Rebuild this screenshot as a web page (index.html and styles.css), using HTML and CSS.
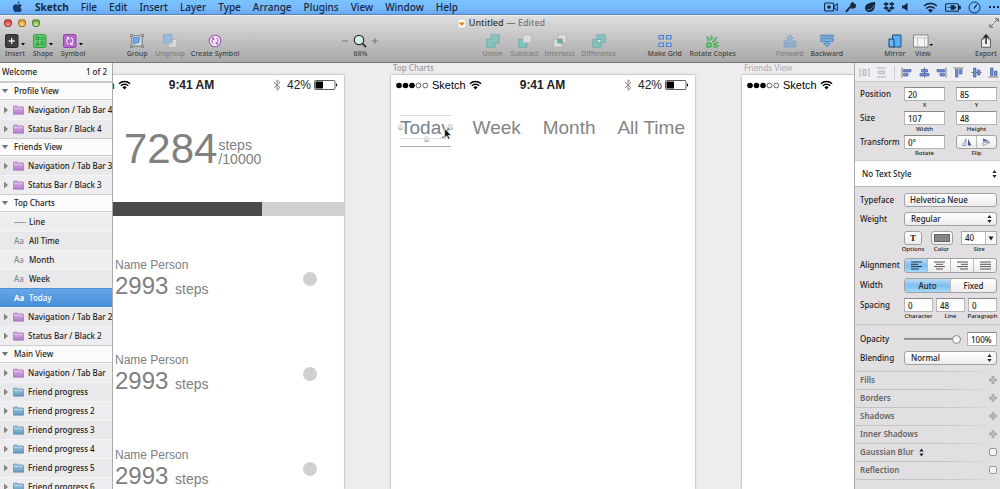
FILE: index.html
```html
<!DOCTYPE html>
<html lang="en">
<head>
<meta charset="utf-8">
<title>Untitled — Sketch</title>
<link rel="stylesheet" href="styles.css">
</head>
<body>
<svg class="defs" aria-hidden="true">
  <defs>
    <linearGradient id="purple" x1="0" y1="0" x2="0" y2="1"><stop offset="0" stop-color="#dcb0e6"/><stop offset="1" stop-color="#b57fcb"/></linearGradient>
    <linearGradient id="blue" x1="0" y1="0" x2="0" y2="1"><stop offset="0" stop-color="#a3cbe4"/><stop offset="1" stop-color="#649bc0"/></linearGradient>
    <symbol id="folder-purple" viewBox="0 0 12 10"><path d="M.5 9.5v-8l.5-.8h3.500l.8 1h5.700l.5.500v7.300z" fill="url(#purple)" stroke="#9868ad" stroke-width=".7"/><path d="M1 3.500h10" stroke="#ecd3f2" stroke-width=".7"/></symbol>
    <symbol id="folder-blue" viewBox="0 0 12 10"><path d="M.5 9.5v-8l.5-.8h3.500l.8 1h5.700l.5.500v7.300z" fill="url(#blue)" stroke="#5484a5" stroke-width=".7"/><path d="M1 3.500h10" stroke="#cfe5f2" stroke-width=".7"/></symbol>
    <symbol id="closed" viewBox="0 0 6 8"><path d="M1 .5v7L5 4z" fill="#858585"/></symbol>
    <symbol id="open" viewBox="0 0 8 6"><path d="M.8 1h6.400L4 5z" fill="#777"/></symbol>
    <symbol id="wifi" viewBox="0 0 14 10"><g fill="none" stroke="currentColor" stroke-width="1.500"><path d="M1 3.600a8.600 8.600 0 0 1 12 0M3 5.900a5.700 5.700 0 0 1 8 0"/></g><path d="M4.700 7.500a3.300 3.300 0 0 1 4.600 0L7 9.800z" fill="currentColor"/></symbol>
    <symbol id="signal" viewBox="0 0 33 7"><g fill="#000"><circle cx="3" cy="3.500" r="2.800"/><circle cx="9.500" cy="3.500" r="2.800"/><circle cx="16" cy="3.500" r="2.800"/></g><g fill="none" stroke="#222" stroke-width=".7"><circle cx="22.500" cy="3.500" r="2.400"/><circle cx="29.300" cy="3.500" r="2.400"/></g></symbol>
    <symbol id="bluetooth" viewBox="0 0 8 12"><path d="M1 3.200l6 5.300-3 2.700V.8l3 2.700-6 5.300" fill="none" stroke="#777" stroke-width=".9"/></symbol>
    <symbol id="battery" viewBox="0 0 24 10"><rect x=".5" y=".5" width="20.500" height="9" rx="1" fill="#fff" stroke="#333" stroke-width=".8"/><path d="M1.500 1.500h7.500v7H1.500z"/><path d="M22 3.300c1.500.5 1.500 2.900 0 3.400z"/></symbol>
    <symbol id="updown" viewBox="0 0 5 9"><path d="M.4 3.600L2.500.6l2.100 3zM.4 5.400l2.100 3 2.100-3z" fill="#222"/></symbol>
    <symbol id="plus" viewBox="0 0 8 8"><path d="M3 .5h2V3h2.500v2H5v2.500H3V5H.5V3H3z" fill="#c0bfc0" stroke="#929192" stroke-width=".6"/></symbol>
  </defs>
</svg>

<div class="screen">
  <header class="menubar">
    <nav class="menus" aria-label="Application menu">
      <svg class="apple" viewBox="0 0 12 13" aria-hidden="true"><path d="M8.200.3c.1 1.300-1 2.700-2.300 2.700C5.800 1.700 6.900.5 8.200.3zM10.700 9.200c-.5 1.300-1.500 3-2.600 3-.8 0-1-.5-2-.5s-1.300.5-2 .5C2.600 12.200 1 9.300 1 7c0-2.300 1.400-3.600 2.800-3.600.9 0 1.600.6 2.200.6.600 0 1.500-.7 2.700-.6.600 0 1.500.3 2 1.100-1.900 1.200-1.500 3.800 0 4.700z" fill="#173a66"/></svg>
      <a class="app-name" href="#">Sketch</a><a href="#">File</a><a href="#">Edit</a><a href="#">Insert</a><a href="#">Layer</a><a href="#">Type</a><a href="#">Arrange</a><a href="#">Plugins</a><a href="#">View</a><a href="#">Window</a><a href="#">Help</a>
    </nav>
    <div class="tray" aria-hidden="true">
      <svg width="14" height="10" viewBox="0 0 14 10"><rect x=".6" y="1" width="9" height="8" rx="1" fill="none" stroke="#12283f" stroke-width="1.100"/><circle cx="5" cy="5" r="1.800" fill="#12283f"/><path d="M10 4l3.300-2.500v7L10 6z" fill="none" stroke="#12283f"/></svg>
      <svg width="12" height="12" viewBox="0 0 12 12"><path d="M1 10.800l5-5.600" stroke="#12283f" stroke-width="2"/><path d="M5 3.500L7.500.8l3.800 3.300-1 2.800-3.500 1z" fill="#12283f"/></svg>
      <svg width="12" height="12" viewBox="0 0 12 12"><path d="M1.300 8.500C-.2 4 4.500 1.500 11 1c.7 4-.7 10-5.500 10C3.500 11 2 10.200 1.300 8.500z" fill="#12283f"/><path d="M3 8.500c3 .8 6-1 7-4.500" stroke="#78b4ef" fill="none" stroke-width=".7"/></svg>
      <svg width="12" height="12" viewBox="0 0 12 12"><path d="M3.300 1L6 3 3 5 .3 3zM8.700 1l3 2L9 5 6 3zM3 5l3 2-2.700 2L.3 7zM9 5l2.700 2-3 2L6 7zM3.500 9.500L6 8l2.500 1.500L6 11.300z" fill="#12283f"/></svg>
      <svg width="6" height="10" viewBox="0 0 6 10"><path d="M0 3.500h2L5.500.8v8.400L2 6.500H0z" fill="#12283f"/></svg>
      <svg class="tray-wifi" width="15" height="11"><use href="#wifi"/></svg>
      <svg width="16" height="9" viewBox="0 0 16 9"><rect x=".6" y=".8" width="12.800" height="7.400" rx="1" fill="none" stroke="#12283f" stroke-width="1.100"/><path d="M14 3h1.500v3H14M2.500 4.500H6M6 2.500h3l2 2-2 2H6z" fill="#12283f" stroke="#12283f" stroke-width=".7"/></svg>
      <svg width="13" height="13" viewBox="0 0 13 13"><circle cx="6.500" cy="6.500" r="5.500" fill="none" stroke="#12283f"/><path d="M6 7.500L9 3.300" stroke="#12283f" stroke-width="1.200"/></svg>
      <svg width="11" height="4" viewBox="0 0 11 4"><path d="M1 2h2M5 2h2M9 2h2" stroke="#12283f" stroke-width="2"/></svg>
    </div>
  </header>

  <header class="chrome">
    <div class="titlebar">
      <div class="lights"><button class="light red" aria-label="Close"></button><button class="light amber" aria-label="Minimize"></button><button class="light green" aria-label="Zoom"></button></div>
      <h1 class="title"><svg width="8" height="9" viewBox="0 0 8 9" aria-hidden="true"><path d="M.5.500h5l2 2v6h-7z" fill="#fff" stroke="#ccc" stroke-width=".5"/><path d="M2 3.200h3.500l1 1.300L3.800 7 1.200 4.500z" fill="#ed8a1c"/></svg>Untitled <span class="muted">— Edited</span></h1>
      <button class="fullscreen" aria-label="Full screen"><svg width="10" height="10" viewBox="0 0 10 10"><path d="M6 .8h3.300V4M9 1L5.500 4.500M4 9.200H.8V6M1 9l3.500-3.500" fill="none" stroke="#666"/></svg></button>
    </div>
    <div class="toolbar">
      <button class="tool w28"><svg class="menu-icon" viewBox="0 0 20 14"><rect x=".5" y=".5" width="12.500" height="13" rx="1.500" fill="#414141" stroke="#2b2b2b"/><path d="M6.700 4v6M3.700 7h6" stroke="#eee" stroke-width="1.300"/><path d="M16 9h4l-2 2.500z"/></svg>Insert</button>
      <button class="tool w28"><svg class="menu-icon" viewBox="0 0 20 14"><rect x=".5" y=".5" width="12.500" height="13" rx="1.500" fill="#63ce70" stroke="#39984a"/><g fill="none" stroke="#257f37" stroke-width=".9"><path d="M3 3h2.800v2.800H3z"/><circle cx="9.500" cy="4.500" r="1.600"/><path d="M2.800 11L4.500 8l1.700 3z"/><rect x="8" y="8.200" width="3" height="2.800" rx=".7"/></g><path d="M16 9h4l-2 2.500z"/></svg>Shape</button>
      <button class="tool w32"><svg class="menu-icon" viewBox="0 0 20 14"><rect x=".5" y=".5" width="12.500" height="13" rx="1.500" fill="#b765cf" stroke="#9147a8"/><path d="M5.500 10.500c-2.500-1.500-2.500-5.500 0-7M3.500 3.500h2.300v2.300M8 3.500c2.500 1.500 2.500 5.500 0 7M10 10.500H7.700V8.200" fill="none" stroke="#f5e3fa" stroke-width="1.100"/><path d="M16 9h4l-2 2.500z"/></svg>Symbol</button>
      <span class="space short"></span>
      <button class="tool w34"><svg viewBox="0 0 14 14"><path d="M1.500 1.500h11v11h-11z" fill="none" stroke="#777" stroke-width=".7"/><path d="M6 6h5v5H6z" fill="#eee" stroke="#aaa" stroke-width=".5"/><path d="M3.500 3.500h5.500v5.500H3.500z" fill="#69aef0" stroke="#347cbd" stroke-width=".7"/><path d="M0 0h3v3H0zM11 0h3v3h-3zM0 11h3v3H0zM11 11h3v3h-3z" fill="#858585"/><path d="M1 1h1v1H1zM12 1h1v1h-1zM1 12h1v1H1zM12 12h1v1h-1z" fill="#ddd"/></svg>Group</button>
      <button class="tool w32" disabled><svg viewBox="0 0 14 14"><path d="M5.500 5.500h8v8h-8z" fill="#e3e3e3" stroke="#aaa" stroke-width=".6"/><path d="M.5.500h8.500V9H.5z" fill="#86b9e6" stroke="#6594bd" stroke-width=".6"/></svg>Ungroup</button>
      <button class="tool w58"><svg viewBox="0 0 14 14"><circle cx="7" cy="7" r="5.800" fill="#f5edf7" stroke="#9c5cae" stroke-width="1.100"/><path d="M5.500 10c-2-1.500-2-4.500 0-6M3.800 4h2v2M8.500 4c2 1.500 2 4.500 0 6M10.200 10h-2V8" fill="none" stroke="#a44bbb"/></svg>Create Symbol</button>
      <span class="space wide"></span>
      <div class="tool w38"><span class="zoomer"><button aria-label="Zoom out"><svg width="6" height="6" viewBox="0 0 6 6"><path d="M0 3h6" stroke="#777"/></svg></button><svg width="14" height="14" viewBox="0 0 14 14"><circle cx="6" cy="6" r="4.700" fill="#d3efed" stroke="#333" stroke-width="1.300"/><path d="M9.300 9.300L13 13" stroke="#333" stroke-width="1.800"/></svg><button aria-label="Zoom in"><svg width="6" height="6" viewBox="0 0 6 6"><path d="M0 3h6M3 0v6" stroke="#777"/></svg></button></span>68%</div>
      <span class="space wide"></span>
      <button class="tool w32" disabled><svg viewBox="0 0 14 14"><path d="M5 .7h8.300v8H9v4.600H.7V5.300H5z" fill="#6cc4be" stroke="#459d99" stroke-width=".7"/></svg>Union</button>
      <button class="tool w32" disabled><svg viewBox="0 0 14 14"><path d="M.7 5.300H9v8H.7z" fill="#6cc4be" stroke="#459d99" stroke-width=".7"/><path d="M5 .7h8.300v8H5z" fill="#e7e7e7" stroke="#aaa" stroke-width=".7"/></svg>Subtract</button>
      <button class="tool w38" disabled><svg viewBox="0 0 14 14"><path d="M5 .7h8.300v8H5zM.7 5.300H9v8H.7z" fill="#e7e7e7" stroke="#aaa" stroke-width=".7"/><path d="M5 5.300h4v3.400H5z" fill="#4bb4ad" stroke="#318d88"/></svg>Intersect</button>
      <button class="tool w40" disabled><svg viewBox="0 0 14 14"><path d="M5 .7h8.300v8H9v4.600H.7V5.300H5z" fill="#6cc4be" stroke="#459d99" stroke-width=".7"/><path d="M5 5.300h4v3.400H5z" fill="#eee" stroke="#459d99"/></svg>Difference</button>
      <span class="space narrow"></span>
      <button class="tool w48"><svg viewBox="0 0 14 14"><path d="M1 1.500h4.500V5H1zM8.500 1.500H13V5H8.500zM1 9h4.500v3.500H1zM8.500 9H13v3.500H8.500z" fill="#a7c8f3" stroke="#4d7fc7" stroke-width="1.100"/></svg>Make Grid</button>
      <button class="tool w48"><svg viewBox="0 0 14 14"><path d="M1 9h4v4H1z" fill="#6edc78" stroke="#2a9b3d"/><g fill="#8bd291" stroke="#3b9b4c" stroke-width=".7"><path d="M1.500 7L1 2l2.500 3zM4 6.500l1.500-5 1.200 3zM6 8l4.500-5-.8 4zM7 10l5.500-2-2.500 3zM7 12l6-.5-2 2H8z"/></g></svg>Rotate Copies</button>
      <span class="space"></span>
      <button class="tool w36" disabled><svg viewBox="0 0 14 14"><path d="M7 .7l3.500 3.800h-2V7H13v2.500H1V7h4.500V4.500h-2zM1 11h12v2H1z" fill="#88b6e7" stroke="#5c8bbd" stroke-width=".7"/></svg>Forward</button>
      <button class="tool w38"><svg viewBox="0 0 14 14"><path d="M.7 1h12.600v2H.7zM.7 4.500h12.600v3H.7z" fill="#75afe9" stroke="#477eb5" stroke-width=".7"/><path d="M5.500 7.500h3v2h2L7 13 3.500 9.500h2z" fill="#75afe9" stroke="#477eb5" stroke-width=".7"/></svg>Backward</button>
      <span class="space"></span>
      <button class="tool w28"><svg viewBox="0 0 14 14"><path d="M4.500 1H13v12H4.500z" fill="#5badf5" stroke="#204f80"/><path d="M1 5h5v8H1z" fill="#67b9fb" stroke="#183f6a"/></svg>Mirror</button>
      <button class="tool w28"><svg class="menu-icon" viewBox="0 0 20 14"><path d="M.5 1h14.500v12H.5z" fill="#f4f4f4" stroke="#777" stroke-width=".8"/><path d="M1 3.800h14M4.500 4v9M11.500 4v9" stroke="#bbb" stroke-width=".8"/><path d="M16.500 10H20l-1.700 2z"/></svg>View</button>
      <span class="space"></span>
      <button class="tool w28"><svg viewBox="0 0 14 14"><path d="M5 5H2.500v8.300h9V5H9" fill="#eee" stroke="#555" stroke-width=".9"/><path d="M7 10V2M4.500 4L7 .9 9.500 4" fill="none" stroke="#222" stroke-width="1.400"/></svg>Export</button>
    </div>
  </header>

  <main class="workspace">
    <aside class="layers">
      <div class="pages"><span>Welcome</span><span>1 of 2</span></div>
      <ul class="layer-list">
        <li class="board-row"><svg class="open"><use href="#open"/></svg>Profile View</li>
        <li><svg class="closed"><use href="#closed"/></svg><svg class="folder"><use href="#folder-purple"/></svg>Navigation / Tab Bar 4</li>
        <li><svg class="closed"><use href="#closed"/></svg><svg class="folder"><use href="#folder-purple"/></svg>Status Bar / Black 4</li>
        <li class="board-row"><svg class="open"><use href="#open"/></svg>Friends View</li>
        <li><svg class="closed"><use href="#closed"/></svg><svg class="folder"><use href="#folder-purple"/></svg>Navigation / Tab Bar 3</li>
        <li><svg class="closed"><use href="#closed"/></svg><svg class="folder"><use href="#folder-purple"/></svg>Status Bar / Black 3</li>
        <li class="board-row"><svg class="open"><use href="#open"/></svg>Top Charts</li>
        <li class="leaf"><span class="kind"><span class="rule"></span></span>Line</li>
        <li class="leaf"><span class="kind">Aa</span>All Time</li>
        <li class="leaf"><span class="kind">Aa</span>Month</li>
        <li class="leaf"><span class="kind">Aa</span>Week</li>
        <li class="leaf selected"><span class="kind">Aa</span>Today</li>
        <li><svg class="closed"><use href="#closed"/></svg><svg class="folder"><use href="#folder-purple"/></svg>Navigation / Tab Bar 2</li>
        <li><svg class="closed"><use href="#closed"/></svg><svg class="folder"><use href="#folder-purple"/></svg>Status Bar / Black 2</li>
        <li class="board-row"><svg class="open"><use href="#open"/></svg>Main View</li>
        <li><svg class="closed"><use href="#closed"/></svg><svg class="folder"><use href="#folder-purple"/></svg>Navigation / Tab Bar</li>
        <li><svg class="closed"><use href="#closed"/></svg><svg class="folder"><use href="#folder-blue"/></svg>Friend progress</li>
        <li><svg class="closed"><use href="#closed"/></svg><svg class="folder"><use href="#folder-blue"/></svg>Friend progress 2</li>
        <li><svg class="closed"><use href="#closed"/></svg><svg class="folder"><use href="#folder-blue"/></svg>Friend progress 3</li>
        <li><svg class="closed"><use href="#closed"/></svg><svg class="folder"><use href="#folder-blue"/></svg>Friend progress 4</li>
        <li><svg class="closed"><use href="#closed"/></svg><svg class="folder"><use href="#folder-blue"/></svg>Friend progress 5</li>
        <li><svg class="closed"><use href="#closed"/></svg><svg class="folder"><use href="#folder-blue"/></svg>Friend progress 6</li>
      </ul>
    </aside>

    <section class="canvas" aria-label="Canvas">
      <article class="artboard main-view">
        <div class="status"><span class="carrier"><svg width="33" height="7"><use href="#signal"/></svg>Sketch<svg width="13" height="10"><use href="#wifi"/></svg></span><b>9:41 AM</b><span class="power"><svg class="bt" width="8" height="12"><use href="#bluetooth"/></svg>42%<svg width="24" height="10"><use href="#battery"/></svg></span></div>
        <div class="total"><span class="total-count">7284</span><span class="total-unit">steps<br>/10000</span></div>
        <div class="meter"><div class="meter-fill" style="width:73%"></div></div>
        <div class="friends">
          <div class="friend"><div class="person"><div class="name">Name Person</div><div class="count">2993 <small>steps</small></div></div><span class="dot"></span></div>
          <div class="friend"><div class="person"><div class="name">Name Person</div><div class="count">2993 <small>steps</small></div></div><span class="dot"></span></div>
          <div class="friend"><div class="person"><div class="name">Name Person</div><div class="count">2993 <small>steps</small></div></div><span class="dot"></span></div>
        </div>
      </article>

      <div class="board-name top-charts-name">Top Charts</div>
      <article class="artboard top-charts">
        <div class="status"><span class="carrier"><svg width="33" height="7"><use href="#signal"/></svg>Sketch<svg width="13" height="10"><use href="#wifi"/></svg></span><b>9:41 AM</b><span class="power"><svg class="bt" width="8" height="12"><use href="#bluetooth"/></svg>42%<svg width="24" height="10"><use href="#battery"/></svg></span></div>
        <div class="tabs">
          <span class="tab current">Today<i class="handle left"></i><i class="handle right"></i><i class="handle bottom"></i><svg class="cursor" viewBox="0 0 8 12" aria-hidden="true"><path d="M.7.700v9L2.800 7.800l1.500 3.500 1.500-.7-1.500-3.300h3z" fill="#111" stroke="#eee" stroke-width=".6"/></svg></span>
          <span class="tab">Week</span><span class="tab">Month</span><span class="tab">All Time</span>
        </div>
      </article>

      <div class="board-name friends-view-name">Friends View</div>
      <article class="artboard friends-view">
        <div class="status"><span class="carrier"><svg width="33" height="7"><use href="#signal"/></svg>Sketch<svg width="13" height="10"><use href="#wifi"/></svg></span></div>
      </article>
    </section>

    <aside class="inspector">
      <div class="align">
        <button aria-label="Distribute horizontally" disabled><svg viewBox="0 0 11 11"><path d="M1 1v9M10 1v9" stroke="#888"/><path d="M4 2.500h3v6H4z" fill="#d7d7e2" stroke="#8a8fb0"/></svg></button>
        <button aria-label="Distribute vertically" disabled><svg viewBox="0 0 11 11"><path d="M1 1h9M1 10h9" stroke="#888"/><path d="M2.500 4.300h6v2.400h-6z" fill="#d7d7e2" stroke="#8a8fb0"/></svg></button>
        <span class="align-split"></span>
        <button aria-label="Align left"><svg viewBox="0 0 11 11"><path d="M1 .5v10" stroke="#777"/><path d="M2.500 2.500H10V5H2.500zM2.500 6.500H7V9H2.500z" fill="#718dce" stroke="#4865aa" stroke-width=".7"/></svg></button>
        <button aria-label="Align centers"><svg viewBox="0 0 11 11"><path d="M5.500.5v10" stroke="#666"/><path d="M2.500 2.500h6V5h-6zM1 6.500h9V9H1z" fill="#718dce" stroke="#4865aa" stroke-width=".7"/></svg></button>
        <button aria-label="Align right"><svg viewBox="0 0 11 11"><path d="M10 .5v10" stroke="#777"/><path d="M1 2.500h7.500V5H1zM4 6.500h4.500V9H4z" fill="#718dce" stroke="#4865aa" stroke-width=".7"/></svg></button>
        <button aria-label="Align top"><svg viewBox="0 0 11 11"><path d="M.5 1h10" stroke="#777"/><path d="M2.500 2.500H5V10H2.500zM6.500 2.500H9V7H6.500z" fill="#718dce" stroke="#4865aa" stroke-width=".7"/></svg></button>
        <button aria-label="Align middles"><svg viewBox="0 0 11 11"><path d="M.5 5.500h10" stroke="#666"/><path d="M2.500 1H5v9H2.500zM6.500 3H9v5H6.500z" fill="#718dce" stroke="#4865aa" stroke-width=".7"/></svg></button>
        <button aria-label="Align bottom"><svg viewBox="0 0 11 11"><path d="M.5 10h10" stroke="#777"/><path d="M2.500 1H5v7.500H2.500zM6.500 4H9v4.500H6.500z" fill="#718dce" stroke="#4865aa" stroke-width=".7"/></svg></button>
      </div>

      <div class="geometry">
        <div class="row"><span class="label">Position</span><div class="pair"><label class="field"><input value="20">X</label><label class="field"><input value="85">Y</label></div></div>
        <div class="row"><span class="label">Size</span><div class="pair"><label class="field"><input value="107">Width</label><label class="field"><input value="48">Height</label></div></div>
        <div class="row"><span class="label">Transform</span><div class="pair"><label class="field"><input value="0°">Rotate</label>
          <div class="field"><div class="segments"><button aria-label="Flip horizontal"><svg width="10" height="8" viewBox="0 0 10 8"><path d="M4 .8v6.700H.6z" fill="#eef" stroke="#667" stroke-width=".6"/><path d="M6 .8v6.700h3.400z" fill="#3c5796"/></svg></button><button aria-label="Flip vertical"><svg width="9" height="8" viewBox="0 0 9 8"><path d="M1 .3v3.200h7z" fill="#4e69a6"/><path d="M1 4.500v3.200l7-3.200z" fill="#eef" stroke="#667" stroke-width=".5"/></svg></button></div>Flip</div></div></div>
      </div>

      <div class="style-picker select-box"><select aria-label="Text style"><option>No Text Style</option></select><svg class="arrows"><use href="#updown"/></svg></div>

      <div class="type">
        <div class="row"><span class="label">Typeface</span><button class="push">Helvetica Neue</button></div>
        <div class="row"><label class="label" for="weight">Weight</label><div class="select-box push-box"><select id="weight"><option>Regular</option></select><svg class="arrows"><use href="#updown"/></svg></div></div>
        <div class="row"><span class="label"></span><div class="text-options">
          <div class="field"><button class="push options" aria-label="Text options">T</button>Options</div>
          <div class="field"><button class="push color" aria-label="Text color"><span class="swatch"></span></button>Color</div>
          <label class="field size"><span class="combo"><input value="40"><svg viewBox="0 0 8 8" aria-hidden="true"><path d="M1.500 2.500h5L4 6.500z" fill="#222"/></svg></span>Size</label>
        </div></div>
        <div class="row"><span class="label">Alignment</span><div class="segments tall">
          <button class="on" aria-label="Left"><svg width="11" height="9" viewBox="0 0 11 9"><path d="M0 1h11M0 3.300h7M0 5.600h11M0 8h8" stroke="#234"/></svg></button>
          <button aria-label="Center"><svg width="11" height="9" viewBox="0 0 11 9"><path d="M0 1h11M2 3.300h7M0 5.600h11M2 8h7" stroke="#555"/></svg></button>
          <button aria-label="Right"><svg width="11" height="9" viewBox="0 0 11 9"><path d="M0 1h11M4 3.300h7M0 5.600h11M3 8h8" stroke="#555"/></svg></button>
          <button aria-label="Justify"><svg width="11" height="9" viewBox="0 0 11 9"><path d="M0 1h11M0 3.300h11M0 5.600h11M0 8h11" stroke="#555"/></svg></button>
        </div></div>
        <div class="row"><span class="label">Width</span><div class="segments tall"><button class="on">Auto</button><button>Fixed</button></div></div>
        <div class="row"><span class="label">Spacing</span><div class="triple"><label class="field"><input value="0">Character</label><label class="field"><input value="48">Line</label><label class="field"><input value="0">Paragraph</label></div></div>
      </div>

      <div class="blend">
        <div class="row"><label class="label" for="opacity">Opacity</label><div class="opacity"><input type="range" id="opacity" value="100"><input class="percent" value="100%" aria-label="Opacity percent"></div></div>
        <div class="row"><label class="label" for="blending">Blending</label><div class="select-box push-box"><select id="blending"><option>Normal</option></select><svg class="arrows"><use href="#updown"/></svg></div></div>
      </div>

      <div class="effects">
        <div class="effect">Fills<button aria-label="Add fill"><svg><use href="#plus"/></svg></button></div>
        <div class="effect">Borders<button aria-label="Add border"><svg><use href="#plus"/></svg></button></div>
        <div class="effect">Shadows<button aria-label="Add shadow"><svg><use href="#plus"/></svg></button></div>
        <div class="effect">Inner Shadows<button aria-label="Add inner shadow"><svg><use href="#plus"/></svg></button></div>
        <label class="effect"><span class="effect-name">Gaussian Blur<svg class="mini-arrows"><use href="#updown"/></svg></span><input type="checkbox"></label>
        <label class="effect">Reflection<input type="checkbox"></label>
        <div class="effect end"></div>
      </div>
    </aside>
  </main>
</div>
</body>
</html>
```

FILE: styles.css
```css
* { box-sizing: border-box; }
body { margin: 0; font: 500 8px/10px "Noto Sans", "Open Sans", sans-serif; color: #222; }
button, input, select { font: inherit; color: inherit; margin: 0; padding: 0; border: 0; background: none; border-radius: 0; }
svg { flex: none; display: block; }
a { color: inherit; text-decoration: none; }
.defs { position: absolute; width: 0; height: 0; }
.screen { height: 100vh; display: flex; flex-direction: column; overflow: hidden; }

/* Menu bar */
.menubar { flex: none; height: 15px; display: flex; justify-content: space-between; align-items: center; padding: 0 1px 0 12px; overflow: hidden; background: linear-gradient(#78c3ff, #79b9fb 60%, #66a7ee); border-bottom: 1px solid #5e88ba; font-size: 10px; line-height: 14px; color: #14283f; }
.menus { display: flex; align-items: center; gap: 12px; }
.apple { width: 11px; height: 12px; }
.app-name { font-weight: 700; }
.tray { display: flex; align-items: center; gap: 7px; }
.tray-wifi { margin-left: 8px; }

/* Window chrome */
.chrome { flex: none; height: 48px; background: linear-gradient(#dedede, #c6c6c6 45%, #a8a8a8); border-top: 1px solid #eee; border-bottom: 1px solid #777; }
.titlebar { height: 14px; display: grid; grid-template-columns: 1fr auto 1fr; align-items: center; padding: 0 1px 0 4px; }
.lights { display: flex; gap: 6px; }
.light { width: 8px; height: 8px; border-radius: 50%; border: 1px solid #0005; }
.red { background: radial-gradient(circle at 50% 80%, #ff9f91, #d9453f 70%); }
.amber { background: radial-gradient(circle at 50% 80%, #ffe69a, #e89a31 70%); }
.green { background: radial-gradient(circle at 50% 80%, #cff39f, #6fae46 70%); }
.title { margin: 0; display: flex; align-items: center; gap: 3px; font-size: 9px; font-weight: 500; line-height: 12px; color: #333; }
.muted { color: #777; }
.fullscreen { justify-self: end; }
.toolbar { display: flex; align-items: flex-start; padding: 4px 0 0 1px; }
.tool { flex: none; display: flex; flex-direction: column; align-items: center; gap: 1px; font-size: 7px; line-height: 10px; white-space: nowrap; color: #444; }
.tool > svg { width: 14px; height: 14px; }
.tool > .menu-icon { width: 20px; }
.tool:disabled { color: #808080; }
.tool:disabled svg { opacity: .7; }
.space { flex: 35 0 0; }
.short { flex-grow: 31; }
.wide { flex-grow: 97; }
.narrow { flex-grow: 22; }
.w28 { width: 28px; }
.w32 { width: 32px; }
.w34 { width: 34px; }
.w36 { width: 36px; }
.w38 { width: 38px; }
.w40 { width: 40px; }
.w48 { width: 48px; }
.w58 { width: 58px; }
.zoomer { display: flex; align-items: center; gap: 5px; }

.workspace { flex: 1; min-height: 0; display: flex; }

/* Layer list */
.layers { flex: none; width: 113px; overflow: hidden; border-right: 1px solid #aaa; background: #eeedf0; }
.pages { height: 19px; display: flex; justify-content: space-between; align-items: center; padding: 0 5px 0 2px; background: #fafafa; border-bottom: 1px solid #ccc; }
.layer-list { margin: 0; padding: 0; list-style: none; }
.layer-list li { height: 19px; display: flex; align-items: center; padding-left: 3px; white-space: nowrap; border-top: 1px solid #f4f3f5; }
.layer-list li:nth-child(odd) { background: #e9e8ea; }
.layer-list .board-row, .layer-list .board-row:nth-child(odd) { height: 18px; padding-left: 1px; gap: 5px; background: #fbfbfb; border-top: 1px solid #ccc; border-bottom: 1px solid #ccc; }
.open { width: 8px; height: 6px; }
.closed { width: 6px; height: 8px; margin-right: 4px; }
.folder { width: 11px; height: 10px; margin-right: 4px; }
.kind { width: 15px; color: #888; }
.rule { display: block; width: 12px; border-top: 1px solid #999; }
.layer-list .leaf { padding-left: 14px; }
.layer-list .selected { background: linear-gradient(#65a7e6, #468cd7); border-color: #4c90d5; color: #fff; }
.selected .kind { color: #fff; font-weight: 700; }

/* Canvas */
.canvas { flex: 1; position: relative; overflow: hidden; background: #eeecef; font-family: "Liberation Sans", Arial, sans-serif; }
.board-name { position: absolute; top: 0; font: 500 8px/10px "Noto Sans", sans-serif; color: #999; }
.artboard { position: absolute; top: 12px; bottom: 0; width: 304px; overflow: hidden; background: #fff; box-shadow: 0 0 2px #0006; }
.main-view { left: -73px; }
.top-charts { left: 278px; }
.top-charts-name { left: 280px; }
.friends-view { left: 629px; }
.friends-view-name { left: 631px; color: #b4b2b5; }
.status { height: 20px; display: grid; grid-template-columns: 1fr auto 1fr; align-items: center; padding: 0 6px 0 5px; font-size: 12px; line-height: 14px; color: #222; }
.carrier { display: flex; align-items: center; gap: 3px; font-size: 11px; color: #000; }
.power { display: flex; align-items: center; justify-content: flex-end; gap: 3px; }
.bt { margin-right: 3px; }
.total { height: 107px; display: flex; align-items: center; gap: 1px; padding-left: 84px; color: #808080; }
.total-count { font-size: 42px; line-height: 46px; }
.total-unit { font-size: 14px; line-height: 14px; padding-top: 6px; }
.meter { height: 14px; background: #d0d0d0; }
.meter-fill { height: 14px; background: #4a4a4a; }
.friends { padding-top: 15px; color: #808080; }
.friend { height: 95px; display: flex; align-items: center; justify-content: space-between; padding: 0 27px 0 75px; }
.person { padding-top: 4px; }
.name { font-size: 12px; line-height: 14px; }
.count { font-size: 24px; line-height: 28px; }
.count small { font-size: 14px; }
.dot { width: 14px; height: 14px; border-radius: 50%; background: #d0d0d0; }
.tabs { display: flex; justify-content: space-between; align-items: flex-start; padding: 20px 10px 0 9px; font-size: 19px; line-height: 26px; color: #848484; }
.current { position: relative; height: 32px; border-bottom: 1px solid #aaa; color: #748190; background: linear-gradient(#ddd, #ddd) 0 0 / 100% 1px no-repeat, linear-gradient(#e2e2e2, #e2e2e2) 0 23px / 100% 1px no-repeat; }
.handle { position: absolute; width: 5px; height: 5px; border-radius: 50%; background: #e4e4e4; box-shadow: 0 1px 1px #0006; }
.left { left: -2px; top: 9px; }
.right { right: -2px; top: 9px; }
.bottom { left: 24px; top: 21px; }
.cursor { position: absolute; right: -1px; top: 13px; width: 8px; height: 12px; }

/* Inspector */
.inspector { flex: none; width: 146px; overflow: hidden; background: #e1dfe2; border-left: 1px solid #aaa; }
.align { height: 19px; display: flex; align-items: center; justify-content: space-between; padding: 0 1px 0 4px; background: #efeff1; border-bottom: 1px solid #ccc; }
.align svg { width: 11px; height: 11px; }
.align button:disabled { opacity: .6; }
.align-split { height: 13px; border-left: 1px solid #ccc; }
.row { display: grid; grid-template-columns: 44px 1fr; align-items: start; }
.label { line-height: 14px; white-space: nowrap; }
.geometry { display: grid; gap: 2px; padding: 5px 3px 3px 5px; }
.pair { display: grid; grid-template-columns: 1fr 1fr; gap: 11px; }
.triple { display: grid; grid-template-columns: 1fr 1fr 1fr; gap: 3px; }
.field { min-width: 0; display: flex; flex-direction: column; align-items: center; font-size: 6px; line-height: 8px; }
.field input, .percent { width: 100%; height: 14px; padding: 0 3px; background: #fff; border: 1px solid #b5b5b5; border-top-color: #888; font-size: 8px; line-height: 12px; }
.segments { width: 100%; height: 14px; display: flex; border: 1px solid #a2a2a2; border-radius: 3px; overflow: hidden; background: linear-gradient(#fff, #ececec); }
.tall { height: 15px; }
.segments button { flex: 1; display: flex; align-items: center; justify-content: center; }
.segments button + button { border-left: 1px solid #bbb; }
.segments .on { background: linear-gradient(#b9dcf8, #80bdf0 50%, #a5dafb); }
.select-box { position: relative; }
.select-box select { width: 100%; height: 100%; appearance: none; padding-left: 7px; outline: 0; }
.arrows { position: absolute; right: 4px; top: 50%; width: 5px; height: 9px; transform: translateY(-50%); pointer-events: none; }
.style-picker { height: 27px; background: #fff; border-top: 1px solid #ccc; border-bottom: 1px solid #bbb; }
.style-picker .arrows { right: 3px; }
.type { display: grid; gap: 5px; padding: 6px 3px 4px 5px; }
.push, .push-box { height: 14px; background: linear-gradient(#fff, #ececec); border: 1px solid #a2a2a2; border-radius: 3px; }
.push { padding-left: 5px; text-align: left; }
.push-box select { padding-left: 6px; }
.text-options { display: grid; grid-template-columns: 18px 22px 36px; justify-content: space-between; }
.options { width: 18px; padding: 0; text-align: center; font: 700 9px/12px "Liberation Serif", serif; }
.color { width: 22px; padding: 2px; }
.swatch { display: block; height: 8px; background: #858585; border: 1px solid #666; }
.combo { width: 100%; height: 14px; display: flex; align-items: center; border: 1px solid #aaa; background: #f5f5f5; }
.combo input { flex: 1; min-width: 0; height: 12px; border: 0; border-right: 1px solid #bbb; }
.combo svg { width: 10px; height: 8px; }
.blend { display: grid; gap: 5px; padding: 7px 3px 6px 5px; border-top: 1px solid #c4c2c5; }
.opacity { display: grid; grid-template-columns: 1fr 30px; gap: 6px; align-items: center; }
.opacity input[type="range"] { width: 100%; height: 14px; appearance: none; background: linear-gradient(#777, #aaa) center / 100% 2px no-repeat; }
.opacity input[type="range"]::-webkit-slider-thumb { appearance: none; width: 9px; height: 9px; border-radius: 50%; border: 1px solid #888; background: #f5f5f5; }
.effect { height: 18px; display: flex; align-items: center; justify-content: space-between; padding: 0 3px 0 5px; font-weight: 600; color: #666; background: linear-gradient(90deg, #c4c2c5 60%, #e1dfe2) top / 100% 1px no-repeat; }
.effect button svg { width: 8px; height: 8px; }
.effect-name { display: flex; align-items: center; gap: 5px; }
.mini-arrows { width: 5px; height: 9px; }
.effect input { appearance: none; width: 8px; height: 8px; border: 1px solid #999; border-radius: 2px; background: #f3f3f3; }
```
